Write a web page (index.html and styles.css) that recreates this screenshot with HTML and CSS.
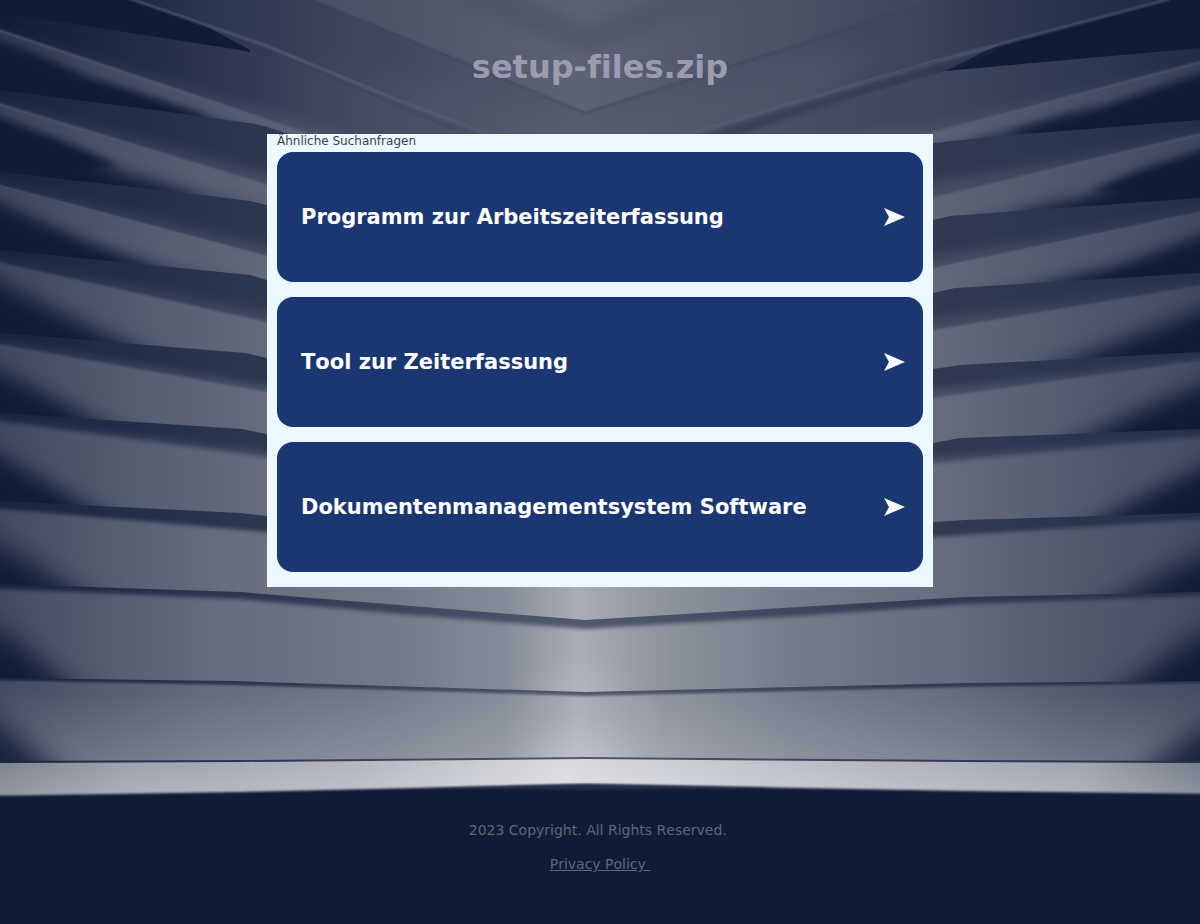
FILE: index.html
```html
<!DOCTYPE html>
<html lang="de">
<head>
<meta charset="utf-8">
<meta name="viewport" content="width=device-width, initial-scale=1">
<title>setup-files.zip</title>
<link rel="stylesheet" href="styles.css">
</head>
<body>
<svg class="backdrop" viewBox="0 0 1200 924" preserveAspectRatio="xMidYMin slice" aria-hidden="true">
  <defs>
    <linearGradient id="sky" gradientUnits="userSpaceOnUse" x1="0" y1="0" x2="1200" y2="0">
      <stop offset="0.1" stop-color="#1c2741"/><stop offset="0.2" stop-color="#2f3a53"/><stop offset="0.3" stop-color="#3c465c"/><stop offset="0.48" stop-color="#535b6e"/><stop offset="0.65" stop-color="#454e63"/><stop offset="0.76" stop-color="#3b455b"/><stop offset="0.87" stop-color="#29344d"/><stop offset="1" stop-color="#1c2741"/>
    </linearGradient>
    <linearGradient id="peak" gradientUnits="userSpaceOnUse" x1="310" y1="0" x2="940" y2="0">
      <stop offset="0" stop-color="#464f64"/><stop offset="0.43" stop-color="#5d6275"/><stop offset="1" stop-color="#3b455a"/>
    </linearGradient>
    <linearGradient id="shade" gradientUnits="userSpaceOnUse" x1="0" y1="0" x2="1200" y2="0">
      <stop offset="0" stop-color="#18233d"/><stop offset="0.1" stop-color="#222d47"/><stop offset="0.22" stop-color="#2c3750"/><stop offset="0.48" stop-color="#51596d"/><stop offset="0.78" stop-color="#303b53"/><stop offset="1" stop-color="#243049"/>
    </linearGradient>
    <linearGradient id="shadeTop" gradientUnits="userSpaceOnUse" x1="0" y1="0" x2="1200" y2="0">
      <stop offset="0" stop-color="#101c36"/><stop offset="0.1" stop-color="#1e2943"/><stop offset="0.2" stop-color="#2f3953"/><stop offset="0.3" stop-color="#434c61"/><stop offset="0.48" stop-color="#51596d"/><stop offset="0.7" stop-color="#434c61"/><stop offset="0.8" stop-color="#3a445a"/><stop offset="0.9" stop-color="#2f3a53"/><stop offset="1" stop-color="#202b45"/>
    </linearGradient>
    <linearGradient id="lit" gradientUnits="userSpaceOnUse" x1="0" y1="0" x2="1200" y2="0">
      <stop offset="0" stop-color="#434d62"/><stop offset="0.1" stop-color="#566073"/><stop offset="0.17" stop-color="#646a7d"/><stop offset="0.25" stop-color="#707586"/><stop offset="0.78" stop-color="#6c7182"/><stop offset="0.86" stop-color="#5c6477"/><stop offset="1" stop-color="#464f65"/>
    </linearGradient>
    <linearGradient id="wide" gradientUnits="userSpaceOnUse" x1="0" y1="0" x2="1200" y2="0">
      <stop offset="0" stop-color="#424b61"/><stop offset="0.08" stop-color="#525c6f"/><stop offset="0.17" stop-color="#656a7d"/><stop offset="0.33" stop-color="#747a89"/><stop offset="0.42" stop-color="#858b98"/><stop offset="0.482" stop-color="#a9adb8"/><stop offset="0.56" stop-color="#8c919d"/><stop offset="0.66" stop-color="#767c8b"/><stop offset="0.8" stop-color="#656a7d"/><stop offset="0.88" stop-color="#535d70"/><stop offset="1" stop-color="#444d62"/>
    </linearGradient>
    <linearGradient id="floor" gradientUnits="userSpaceOnUse" x1="0" y1="0" x2="1200" y2="0">
      <stop offset="0" stop-color="#7d8290"/><stop offset="0.1" stop-color="#9da1ac"/><stop offset="0.3" stop-color="#b4b7c1"/><stop offset="0.47" stop-color="#dadbdf"/><stop offset="0.65" stop-color="#bec1ca"/><stop offset="0.9" stop-color="#a2a5b0"/><stop offset="1" stop-color="#777c8b"/>
    </linearGradient>
    <linearGradient id="ridge" gradientUnits="userSpaceOnUse" x1="0" y1="0" x2="1200" y2="0">
      <stop offset="0" stop-color="#485166"/><stop offset="0.25" stop-color="#5c6376"/><stop offset="0.78" stop-color="#5a6174"/><stop offset="1" stop-color="#4c556a"/>
    </linearGradient>
    <linearGradient id="glow" x1="0" y1="0" x2="0" y2="1">
      <stop offset="0" stop-color="#fff" stop-opacity="0"/><stop offset="1" stop-color="#fff" stop-opacity="0.17"/>
    </linearGradient>
    <filter id="soft1" x="-10%" y="-10%" width="120%" height="120%" color-interpolation-filters="sRGB"><feGaussianBlur stdDeviation="1"/></filter>
    <filter id="soft2" x="-10%" y="-10%" width="120%" height="120%" color-interpolation-filters="sRGB"><feGaussianBlur stdDeviation="2"/></filter>
    <filter id="soft4" x="-30%" y="-50%" width="160%" height="200%" color-interpolation-filters="sRGB"><feGaussianBlur stdDeviation="4"/></filter>
    <filter id="soft7" x="-30%" y="-50%" width="160%" height="200%" color-interpolation-filters="sRGB"><feGaussianBlur stdDeviation="7"/></filter>
    <filter id="soft10" x="-60%" y="-80%" width="220%" height="260%" color-interpolation-filters="sRGB"><feGaussianBlur stdDeviation="10"/></filter>
    <filter id="soft14" x="-80%" y="-100%" width="260%" height="300%" color-interpolation-filters="sRGB"><feGaussianBlur stdDeviation="14"/></filter>
  </defs>

  <rect width="1200" height="924" fill="#101c36"/>

  <!-- Top folds -->
  <path fill="url(#sky)" d="M133 0L267 46L400 101L585 170L690 134L800 101L933 62L1165 0Z"/>
  <path fill="#5b6275" opacity="0.4" filter="url(#soft14)" d="M300 60L430 90L585 125L740 80L900 40L800 110L585 170L400 101Z"/>
  <path fill="url(#peak)" d="M315 0L400 35L585 112L800 43L930 0Z"/>
  <path fill="#4b5468" opacity="0.7" filter="url(#soft7)" d="M400 -20L585 54L780 -20L760 -38L585 26L440 -38Z"/>
  <path class="crease" stroke="#3d465c" filter="url(#soft1)" d="M315 1L400 36L585 113L800 44L930 1"/>

  <!-- Fold 1 -->
  <path fill="url(#shadeTop)" d="M200 23L267 46L400 101L585 170L690 134L800 101L1000 44L945 71L933 200H250V50Z"/>
  <path fill="#28334c" opacity="0.5" filter="url(#soft2)" d="M1010 44L933 66L800 105L700 137L735 137L800 114L945 72Z"/>
  <path fill="#28334c" opacity="0.4" filter="url(#soft4)" d="M240 42L267 52L400 108L470 138L430 134L380 112L267 62Z"/>
  <path fill="#101c36" filter="url(#soft4)" d="M100 -14L140 14L190 34L250 54L160 44L0 14V-14ZM1220 -10L1165 12L1060 44L930 76L1080 65L1220 50Z"/>
  <path fill="url(#shadeTop)" d="M0 14L60 22L240 50L290 60L460 134H0ZM850 99L945 71L1200 48V200H850Z"/>
  <path class="glint" stroke="url(#ridge)" filter="url(#soft1)" d="M125 -3L267 46L400 101L585 170L690 134L800 101L933 62L1170 -1"/>
  <path fill="url(#lit)" opacity="0.3" filter="url(#soft7)" d="M-20 26L267 112L340 134V300H-20ZM1220 59L933 126L860 134V300H1220Z"/>
  <path fill="url(#lit)" opacity="0.5" d="M0 30L267 120L305 134V300H0ZM1200 62L933 133V300H1200Z"/>
  <path class="glint" stroke="url(#ridge)" filter="url(#soft1)" d="M-5 29L267 120L310 135M1205 61L925 135"/>
  <path fill="#101c36" filter="url(#soft4)" d="M-20 33L30 51L100 82L210 118L-20 160ZM1220 66L1110 104L1010 134L1220 160Z"/>
  <path fill="#101c36" opacity="0.6" filter="url(#soft4)" d="M90 78L267 135L200 140L120 110ZM1100 104L933 150L1030 145Z"/>

  <!-- Fold 2 -->
  <path fill="url(#shade)" d="M0 90L185 114L255 124L267 127L585 230L933 143L1000 136L1200 120V924H0Z"/>
  <path fill="url(#lit)" opacity="0.4" filter="url(#soft7)" d="M-20 98L267 174L585 270L933 184L1220 130V400H-20Z"/>
  <path fill="url(#lit)" opacity="0.65" d="M0 104L267 185L585 280L933 198L1200 134V400H0Z"/>
  <path class="glint" stroke="url(#ridge)" filter="url(#soft1)" d="M-5 103L267 185M1205 133L933 198"/>
  <path fill="#101c36" filter="url(#soft4)" d="M-20 110L60 140L120 166L-20 190ZM1220 144L1140 170L1090 192L1220 200Z"/>
  <path fill="#101c36" filter="url(#soft7)" d="M-20 118L90 162L205 202L-20 240ZM1220 152L1110 190L1005 220L1220 240Z"/>
  <path fill="#101c36" opacity="0.4" filter="url(#soft7)" d="M120 170L267 210L180 215ZM1080 195L933 230L1030 225Z"/>

  <!-- Fold 3 -->
  <path fill="url(#shade)" d="M0 172L185 193L250 201L267 205L585 300L933 220L950 216L1200 198V924H0Z"/>
  <path fill="url(#lit)" opacity="0.4" filter="url(#soft7)" d="M-20 179L267 247L585 330L933 258L1220 208V500H-20Z"/>
  <path fill="url(#lit)" opacity="0.75" d="M0 185L267 256L585 340L933 268L1200 212V500H0Z"/>
  <path class="glint" stroke="url(#ridge)" opacity="0.5" filter="url(#soft1)" d="M-5 184L267 256M1205 211L933 268"/>
  <path fill="#101c36" filter="url(#soft7)" d="M-30 190L60 230L175 278L-30 300ZM1230 224L1140 258L1025 294L1230 310Z"/>
  <path fill="#101c36" opacity="0.35" filter="url(#soft7)" d="M100 250L250 284L140 288ZM1100 268L960 298L1060 298Z"/>

  <!-- Fold 4 -->
  <path fill="url(#shade)" d="M0 250L250 275L267 280L585 370L933 293L955 288L1200 273V924H0Z"/>
  <path fill="url(#lit)" opacity="0.4" filter="url(#soft7)" d="M-20 257L267 314L585 384L933 321L1220 280V500H-20Z"/>
  <path fill="url(#lit)" opacity="0.8" filter="url(#soft1)" d="M-20 258L267 322L585 390L933 330L1220 282V500H-20Z"/>
  <path fill="#101c36" filter="url(#soft10)" d="M-40 262L50 308L165 362L-40 385ZM1240 294L1140 334L1030 376L1240 385Z"/>

  <!-- Fold 5 -->
  <path fill="url(#shade)" d="M0 333L245 353L267 358L585 430L933 369L960 365L1200 352V924H0Z"/>
  <path fill="url(#lit)" opacity="0.5" filter="url(#soft4)" d="M-20 339L267 386L585 436L933 391L1220 355V600H-20Z"/>
  <path fill="url(#lit)" opacity="0.85" filter="url(#soft1)" d="M-20 341L267 392L585 440L933 398L1220 358V600H-20Z"/>
  <path fill="#101c36" filter="url(#soft10)" d="M-40 352L50 396L140 444L-40 465ZM1240 370L1150 406L1050 452L1240 465Z"/>

  <!-- Fold 6 -->
  <path fill="url(#shade)" d="M0 413L242 429L267 434L585 500L933 443L960 438L1200 429V924H0Z"/>
  <path fill="url(#lit)" opacity="0.5" filter="url(#soft4)" d="M-20 418L267 453L585 506L933 459L1220 434V700H-20Z"/>
  <path fill="url(#lit)" opacity="0.85" filter="url(#soft2)" d="M-20 419L267 458L585 510L933 464L1220 435V700H-20Z"/>
  <path fill="#101c36" filter="url(#soft10)" d="M-40 434L40 478L125 528L-40 550ZM1240 450L1160 488L1070 535L1240 550Z"/>

  <!-- Fold 7 -->
  <path fill="url(#shade)" d="M0 501L240 513L267 516L585 560L933 522L965 520L1200 513V924H0Z"/>
  <path fill="url(#wide)" filter="url(#soft2)" d="M-20 507L267 532L585 575L933 537L1220 518V700H-20Z"/>
  <path fill="#101c36" filter="url(#soft14)" d="M-60 518L20 556L110 615L-60 650ZM1260 532L1180 565L1085 618L1260 650Z"/>

  <!-- Fold 8 -->
  <path fill="url(#shade)" d="M0 584L240 592L585 620L965 597L1200 592V924H0Z"/>
  <path fill="url(#wide)" filter="url(#soft2)" d="M-20 588L240 599L400 614L585 629L800 616L965 604L1220 595V800H-20Z"/>
  <path fill="#101c36" filter="url(#soft14)" d="M-60 608L10 636L100 712L-60 735ZM1260 612L1190 640L1090 712L1260 735Z"/>
  <ellipse cx="578" cy="694" rx="46" ry="22" fill="#c6cad2" opacity="0.3" filter="url(#soft14)"/>

  <!-- Fold 9 -->
  <path fill="url(#shade)" d="M0 678L233 681L585 692L965 683L1200 681V924H0Z"/>
  <path fill="url(#wide)" filter="url(#soft1)" d="M-20 680L233 685L585 696L965 687L1220 683V800H-20Z"/>
  <path fill="url(#glow)" d="M0 690H1200V762H0Z"/>
  <path fill="#101c36" opacity="0.9" filter="url(#soft14)" d="M-60 706L0 722L85 795H-60ZM1260 712L1200 728L1115 795H1260Z"/>
  <ellipse cx="578" cy="762" rx="46" ry="24" fill="#d0d3da" opacity="0.3" filter="url(#soft14)"/>

  <!-- Floor -->
  <path fill="url(#floor)" d="M0 762L240 761L585 758L965 761L1200 762V924H0Z"/>
  <path fill="url(#glow)" d="M0 762H1200V796H0Z"/>
  <path class="seam" stroke="url(#shade)" d="M0 762L240 761L585 758L965 761L1200 762"/>
  <path fill="#101c36" filter="url(#soft1)" d="M-20 796L240 792L585 784L965 791L1220 794V940H-20Z"/>
  <path fill="#2b3650" opacity="0.7" filter="url(#soft1)" d="M420 788L585 784L780 788L585 790Z"/>
  <rect y="800" width="1200" height="124" fill="#101c36"/>
</svg>

<div class="page">
  <header class="header"><h1 class="domain">setup-files.zip</h1></header>
  <main class="panel">
    <h2 class="panel-title">Ähnliche Suchanfragen</h2>
    <nav class="links" aria-label="Ähnliche Suchanfragen">
      <a class="card" href="#arbeitszeit"><span>Programm zur Arbeitszeiterfassung</span><svg class="arrow" viewBox="0 0 21 18" aria-hidden="true"><path d="M0 0L21 9L0 18L5 9Z"/></svg></a>
      <a class="card" href="#zeiterfassung"><span>Tool zur Zeiterfassung</span><svg class="arrow" viewBox="0 0 21 18" aria-hidden="true"><path d="M0 0L21 9L0 18L5 9Z"/></svg></a>
      <a class="card" href="#dokumente"><span>Dokumentenmanagementsystem Software</span><svg class="arrow" viewBox="0 0 21 18" aria-hidden="true"><path d="M0 0L21 9L0 18L5 9Z"/></svg></a>
    </nav>
  </main>
  <footer class="footer">
    <p class="copyright">2023 Copyright. All Rights Reserved.&nbsp;</p>
    <a class="privacy" href="#privacy">Privacy Policy&nbsp;</a>
  </footer>
</div>
</body>
</html>
```
FILE: styles.css
```css
* {
  box-sizing: border-box;
}

body {
  margin: 0;
  min-height: 100vh;
  background: #101c36;
  font-family: "DejaVu Sans", sans-serif;
  font-kerning: none;
  font-variant-ligatures: none;
}

.backdrop {
  position: absolute;
  top: 0;
  left: 0;
  z-index: -1;
  width: 100%;
  height: 100%;
}

.crease,
.glint,
.seam {
  fill: none;
  stroke-width: 2px;
}

.crease {
  opacity: 0.6;
}

.page {
  display: flex;
  flex-direction: column;
  align-items: center;
}

.header {
  padding: 48px 16px;
}

.domain {
  margin: 0;
  font-size: 32px;
  line-height: 38px;
  color: #9b9cb0;
}

.panel {
  width: 100%;
  max-width: 666px;
  padding: 0 10px 15px;
  background: #ecf8ff;
}

.panel-title {
  margin: 0;
  padding-bottom: 4px;
  font-size: 12px;
  font-weight: 400;
  line-height: 14px;
  color: #3c4043;
}

.links {
  display: flex;
  flex-direction: column;
  gap: 15px;
}

.card {
  display: flex;
  align-items: center;
  justify-content: space-between;
  gap: 16px;
  min-height: 130px;
  padding: 0 18px 0 24px;
  border-radius: 16px;
  background: #1b3773;
  color: #fff;
  font-size: 21px;
  font-weight: 700;
  line-height: 28px;
  text-decoration: none;
}

.arrow {
  flex: none;
  width: 21px;
  height: 18px;
  fill: #fff;
}

.footer {
  display: flex;
  flex-direction: column;
  align-items: center;
  gap: 14px;
  padding: 233px 16px 40px;
  font-size: 14px;
  line-height: 20px;
  color: #626675;
}

.copyright {
  margin: 0;
}

.privacy {
  color: inherit;
  text-decoration: underline;
}
```
